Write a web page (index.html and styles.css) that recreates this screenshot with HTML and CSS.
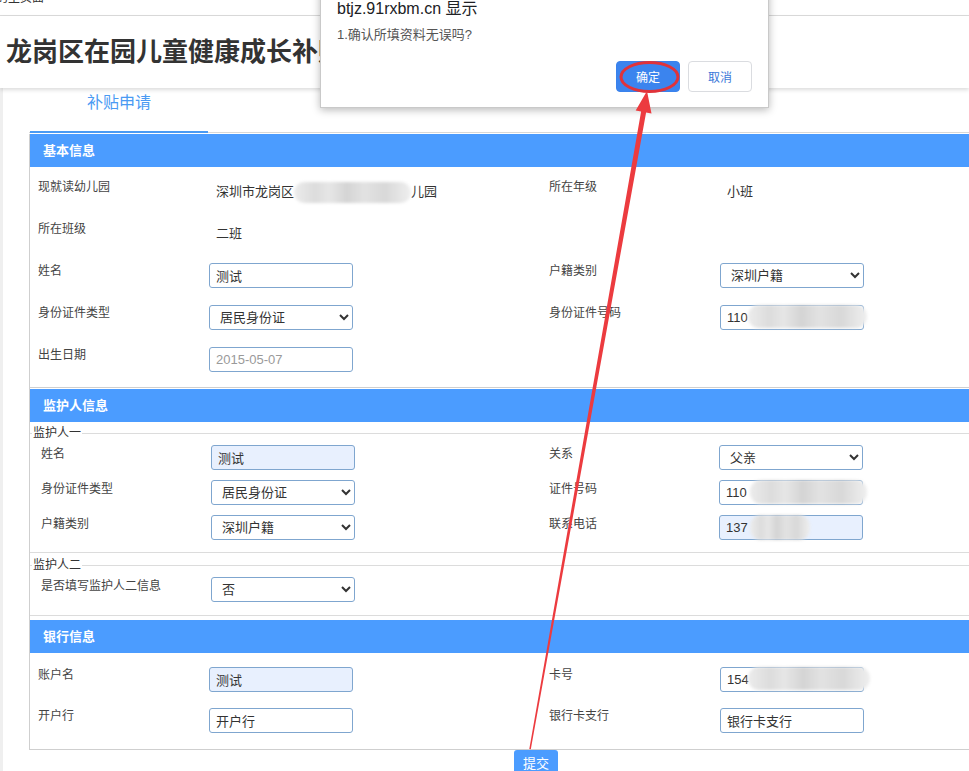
FILE: index.html
```html
<!DOCTYPE html>
<html lang="zh-CN">
<head>
<meta charset="utf-8">
<title>补贴申请</title>
<link rel="stylesheet" href="styles.css">
</head>
<body>
<div class="topbar"><span class="crumb">的主页面</span></div>
<header class="header"><h1 class="title">龙岗区在园儿童健康成长补贴申请</h1></header>
<main class="main">
  <ul class="tabs"><li class="tab">补贴申请</li></ul>
  <div class="form">
    <section class="sec sec-basic">
      <h2 class="sec-head">基本信息</h2>
      <div class="grid grid-basic">
        <div class="lbl">现就读幼儿园</div>
        <div class="val">深圳市龙岗区<span class="blur blur-kg"></span>儿园</div>
        <div class="lbl lbl-r">所在年级</div>
        <div class="val">小班</div>

        <div class="lbl">所在班级</div>
        <div class="val">二班</div>
        <div></div><div></div>

        <div class="lbl">姓名</div>
        <div><input class="inp" value="测试"></div>
        <div class="lbl lbl-r">户籍类别</div>
        <div><select class="sel"><option>深圳户籍</option></select></div>

        <div class="lbl">身份证件类型</div>
        <div><select class="sel"><option>居民身份证</option></select></div>
        <div class="lbl lbl-r">身份证件号码</div>
        <div><span class="field"><input class="inp" value="110"><span class="blur blur-id"></span></span></div>

        <div class="lbl">出生日期</div>
        <div><input class="inp muted" value="2015-05-07"></div>
        <div></div><div></div>
      </div>
    </section>

    <section class="sec sec-guard">
      <h2 class="sec-head sec-head-g">监护人信息</h2>
      <fieldset class="fs fs-one">
        <legend class="lg">监护人一</legend>
        <div class="grid grid-fs">
          <div class="lbl">姓名</div>
          <div><input class="inp auto" value="测试"></div>
          <div class="lbl lbl-r">关系</div>
          <div><select class="sel"><option>父亲</option></select></div>

          <div class="lbl">身份证件类型</div>
          <div><select class="sel"><option>居民身份证</option></select></div>
          <div class="lbl lbl-r">证件号码</div>
          <div><span class="field"><input class="inp" value="110"><span class="blur blur-id2"></span></span></div>

          <div class="lbl">户籍类别</div>
          <div><select class="sel"><option>深圳户籍</option></select></div>
          <div class="lbl lbl-r">联系电话</div>
          <div><span class="field"><input class="inp auto" value="137"><span class="blur blur-phone"></span></span></div>
        </div>
      </fieldset>
      <fieldset class="fs fs-two">
        <legend class="lg">监护人二</legend>
        <div class="grid grid-fs">
          <div class="lbl">是否填写监护人二信息</div>
          <div><select class="sel"><option>否</option></select></div>
        </div>
      </fieldset>
    </section>

    <section class="sec sec-bank">
      <h2 class="sec-head sec-head-b">银行信息</h2>
      <div class="grid grid-bank">
        <div class="lbl">账户名</div>
        <div><input class="inp auto" value="测试"></div>
        <div class="lbl lbl-r">卡号</div>
        <div><span class="field"><input class="inp" value="154"><span class="blur blur-card"></span></span></div>

        <div class="lbl">开户行</div>
        <div><input class="inp" value="开户行"></div>
        <div class="lbl lbl-r">银行卡支行</div>
        <div><input class="inp" value="银行卡支行"></div>
      </div>
    </section>
  </div>
  <div class="actions"><button class="submit">提交</button></div>
</main>

<div class="dialog">
  <div class="dlg-title">btjz.91rxbm.cn 显示</div>
  <div class="dlg-msg">1.确认所填资料无误吗?</div>
  <div class="dlg-btns">
    <button class="dbtn dbtn-ok">确定</button>
    <button class="dbtn dbtn-cancel">取消</button>
  </div>
</div>

<svg class="annot" width="969" height="771" viewBox="0 0 969 771">
  <ellipse cx="649.5" cy="77" rx="28.5" ry="14.5" fill="none" stroke="#e0333a" stroke-width="3"/>
  <polygon fill="#ec3b3f" points="529.3,749 530.8,749.2 646.1,112.4 651.5,113.4 647,91 635.7,110.6 641.1,111.6"/>
</svg>
</body>
</html>
```
FILE: styles.css
```css
html, body {
  margin: 0;
  padding: 0;
}
html {
  overflow: hidden;
}
body {
  position: relative;
  min-height: 771px;
  background: #efefef;
  font-family: "Liberation Sans", "Noto Sans CJK SC", sans-serif;
  font-size: 12px;
  color: #333;
}

.topbar {
  height: 15px;
  background: #fff;
  border-bottom: 1px solid #dcdcdc;
  overflow: hidden;
}
.crumb {
  display: block;
  margin: -9px 0 0 -4px;
  font-size: 12px;
  line-height: 14px;
  color: #333;
}

.header {
  position: relative;
  z-index: 1;
  height: 72px;
  display: flex;
  align-items: center;
  padding-left: 6px;
  background: #fff;
  box-shadow: 0 2px 4px rgba(0, 0, 0, 0.14);
}
.title {
  margin: 0;
  font-size: 26px;
  line-height: 32px;
  font-weight: bold;
  color: #333;
  white-space: nowrap;
}

.main {
  margin-left: 3px;
  padding-left: 26px;
  background: #fff;
  min-height: 683px;
}

.tabs {
  display: flex;
  margin: 0;
  padding: 0;
  list-style: none;
  height: 44px;
  border-bottom: 1px solid #d8d8d8;
}
.tab {
  box-sizing: border-box;
  width: 178px;
  height: 45px;
  margin-left: 1px;
  padding-top: 5px;
  text-align: center;
  font-size: 16px;
  line-height: 20px;
  color: #4a9af3;
  border-bottom: 2px solid #4a9af3;
}

.form {
  margin-top: 1px;
  border-left: 1px solid #cfcfcf;
}

.sec-head {
  margin: 0;
  height: 33px;
  line-height: 33px;
  padding-left: 13px;
  background: #4b9cff;
  color: #fff;
  font-size: 13px;
  font-weight: bold;
}
.sec-head-g {
  margin-top: 1px;
}
.sec-head-b {
  margin-top: 4px;
}

.grid {
  display: grid;
  align-items: start;
}
.grid-basic {
  grid-template-columns: 179px 340px 171px 1fr;
  row-gap: 17px;
  padding: 12px 0 15px;
  border-bottom: 1px solid #cfcfcf;
}
.grid-bank {
  grid-template-columns: 179px 340px 171px 1fr;
  row-gap: 16px;
  padding: 14px 0 16px;
  border-bottom: 1px solid #cfcfcf;
}
.grid-fs {
  grid-template-columns: 181px 338px 170px 1fr;
  row-gap: 10px;
}

.lbl {
  padding-left: 8px;
  font-size: 12px;
  line-height: 16px;
  color: #444;
  white-space: nowrap;
}
.grid-fs .lbl {
  padding-left: 11px;
  padding-top: 1px;
}
.grid .lbl-r,
.grid-fs .lbl-r {
  padding-left: 0;
}
.val {
  padding-left: 7px;
  font-size: 13px;
  line-height: 25px;
  color: #333;
  white-space: nowrap;
}

.fs {
  margin: 4px 0 0;
  padding: 5px 0 12px;
  border: 0;
  border-top: 1px solid #dcdcdc;
  border-bottom: 1px solid #dcdcdc;
  min-width: 0;
}
.fs-two {
  margin-top: 5px;
  padding-bottom: 13px;
}
.lg {
  margin-left: 2px;
  padding: 0 1px;
  font-size: 12px;
  line-height: 14px;
  color: #333;
}

.inp,
.sel {
  box-sizing: border-box;
  width: 144px;
  height: 25px;
  margin: 0;
  border: 1px solid #7fa6cf;
  border-radius: 3px;
  background: #fff;
  font-family: "Liberation Sans", "Noto Sans CJK SC", sans-serif;
  font-size: 13px;
  color: #333;
  vertical-align: top;
}
.inp {
  padding: 0 6px;
}
.sel {
  padding: 0 0 0 6px;
}
.inp.auto {
  background: #e8f0fe;
}
.inp.muted {
  color: #9a9a9a;
}

.field {
  position: relative;
  display: inline-block;
  vertical-align: top;
}

.blur {
  display: inline-block;
  border-radius: 11px;
  background: linear-gradient(90deg, #ececec 0%, #dcdcdc 18%, #e6e6e6 30%, #d4d4d4 45%, #e2e2e2 60%, #d8d8d8 78%, #efefef 100%);
  filter: blur(1.5px);
}
.blur-kg {
  width: 117px;
  height: 21px;
  vertical-align: middle;
}
.field .blur {
  position: absolute;
  top: 0;
}
.blur-id {
  left: 28px;
  width: 119px;
  height: 23px;
}
.blur-id2 {
  left: 31px;
  width: 117px;
  height: 24px;
}
.blur-phone {
  left: 31px;
  width: 60px;
  height: 25px;
}
.blur-card {
  left: 28px;
  width: 122px;
  height: 23px;
}

.actions {
  padding-left: 485px;
}
.submit {
  display: block;
  border: 0;
  border-radius: 3px;
  padding: 6px 9px;
  background: #4b9cff;
  color: #fff;
  font-family: "Liberation Sans", "Noto Sans CJK SC", sans-serif;
  font-size: 13px;
  line-height: 16px;
}

.dialog {
  position: absolute;
  z-index: 10;
  left: 320px;
  top: -18px;
  box-sizing: border-box;
  width: 449px;
  padding: 16px 16px 15px;
  background: #fff;
  border: 1px solid #c9c9c9;
  box-shadow: 0 2px 8px rgba(0, 0, 0, 0.28);
}
.dlg-title {
  font-size: 16px;
  line-height: 20px;
  color: #202124;
}
.dlg-msg {
  margin-top: 8px;
  font-size: 13px;
  line-height: 16px;
  color: #555;
}
.dlg-btns {
  display: flex;
  justify-content: flex-end;
  gap: 8px;
  margin-top: 18px;
}
.dbtn {
  box-sizing: border-box;
  width: 64px;
  height: 31px;
  border-radius: 4px;
  font-family: "Liberation Sans", "Noto Sans CJK SC", sans-serif;
  font-size: 12px;
}
.dbtn-ok {
  border: 1px solid #3a82ec;
  background: #3b84ee;
  color: #fff;
}
.dbtn-cancel {
  border: 1px solid #dadce0;
  background: #fff;
  color: #3a78d8;
}

.annot {
  position: absolute;
  z-index: 20;
  left: 0;
  top: 0;
  pointer-events: none;
}
```
